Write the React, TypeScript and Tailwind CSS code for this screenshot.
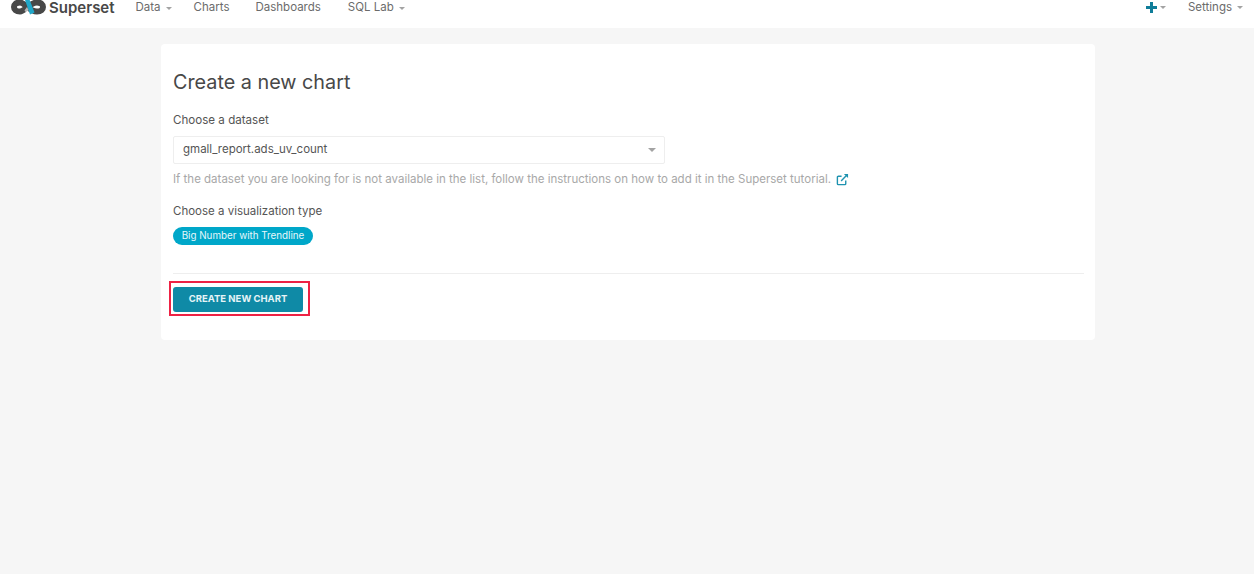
function Caret({ className = 'h-[3px] w-[6px]' }: { className?: string }) {
  return (
    <svg viewBox="0 0 8 4" className={`fill-[#a3a3a3] ${className}`}>
      <path d="M0 0h8L4 4z" />
    </svg>
  );
}

function Logo() {
  return (
    <svg viewBox="0 0 35 18" className="h-[18px] w-[35px]">
      <path
        d="M9 4.500C5 4.500 3 6.500 3 9s2 4.500 6 4.500c5 0 9-9 17-9 4 0 6 2 6 4.500s-2 4.500-6 4.500c-8 0-12-9-17-9z"
        fill="none"
        stroke="#484848"
        strokeWidth="6"
      />
      <path d="M14 2l4.500-.5 5 13-4.500 2z" fill="#20a7c9" />
      <path d="M13.500 12.500l2.500-3.500 1.500 3-2 3z" fill="#fff" opacity="0.6" />
    </svg>
  );
}

function NavItem({ label, caret }: { label: string; caret?: boolean }) {
  return (
    <div className="flex items-center gap-[5px] text-[11.500px] text-[#6b6b6b]">
      <span>{label}</span>
      {caret && <Caret />}
    </div>
  );
}

export default function App() {
  return (
    <div className="min-h-[574px] bg-[#f6f6f6] font-['Inter','Noto_Sans',sans-serif]">
      <header className="flex h-[28px] items-start justify-between bg-white pl-[11px] pr-[11px]">
        <div className="flex items-center">
          <div className="-mt-[2px] flex items-center">
            <Logo />
            <span className="ml-[3px] text-[15px] font-semibold leading-[15px] text-[#484848]">Superset</span>
          </div>
          <nav className="ml-[21px] flex h-[15px] items-center gap-[22px]">
            <NavItem label="Data" caret />
            <NavItem label="Charts" />
            <div className="ml-[4px]">
              <NavItem label="Dashboards" />
            </div>
            <div className="ml-[5px]">
              <NavItem label="SQL Lab" caret />
            </div>
          </nav>
        </div>
        <div className="flex h-[15px] items-center gap-[22px]">
          <div className="flex items-center gap-[3px]">
            <svg viewBox="0 0 11 11" className="h-[11px] w-[11px] fill-[#0f7d99]">
              <path d="M4 0h3v4h4v3H7v4H4V7H0V4h4z" />
            </svg>
            <Caret />
          </div>
          <NavItem label="Settings" caret />
        </div>
      </header>

      <main className="pl-[161px] pt-[16px]">
        <section className="h-[296px] w-[934px] rounded-[4px] bg-white pl-[12px] pr-[11px] pt-[25px]">
          <h1 className="text-[19.800px] leading-[26px] text-[#484848]">Create a new chart</h1>

          <div className="mt-[17px] text-[11.600px] leading-[16px] text-[#555555]">Choose a dataset</div>
          <div className="mt-[8px] flex h-[28px] w-[492px] items-center justify-between rounded-[2px] border border-[#eeeeee] pl-[9px] pr-[8px] text-[11.500px] text-[#555555]">
            <span>gmall_report.ads_uv_count</span>
            <Caret className="h-[4px] w-[8px]" />
          </div>
          <div className="mt-[7px] flex items-center gap-[5px] text-[11.500px] leading-[16px] text-[#a8a8a8]">
            <span>If the dataset you are looking for is not available in the list, follow the instructions on how to add it in the Superset tutorial.</span>
            <svg viewBox="0 0 14 14" className="h-[13px] w-[13px]" fill="none" stroke="#1f93b0" strokeWidth="1.500">
              <path d="M10.500 8v3.500a1 1 0 0 1-1 1h-7a1 1 0 0 1-1-1v-7a1 1 0 0 1 1-1H6" />
              <path d="M5.500 8.500L12 2" />
              <path d="M8.500 1h4.500v4.500z" fill="#1f93b0" stroke="none" />
            </svg>
          </div>

          <div className="mt-[16px] text-[11.500px] leading-[16px] text-[#555555]">Choose a visualization type</div>
          <div className="mt-[8px] flex h-[18px] w-[140px] items-center justify-center rounded-full bg-[#00a7c9] text-[9.800px] text-[#e6f7fb]">
            Big Number with Trendline
          </div>

          <hr className="mt-[28px] border-t border-[#eeeeee]" />

          <div className="relative mt-[13px] w-[130px]">
            <button
              type="button"
              className="block h-[25px] w-[130px] rounded-[3px] bg-[#0f8aa6] text-[9.500px] font-bold text-[#e6f4f7]"
            >
              CREATE NEW CHART
            </button>
            <div className="pointer-events-none absolute -left-[4px] -right-[7px] -top-[6px] -bottom-[4px] border-2 border-[#ee2244]" />
          </div>
        </section>
      </main>
    </div>
  );
}
